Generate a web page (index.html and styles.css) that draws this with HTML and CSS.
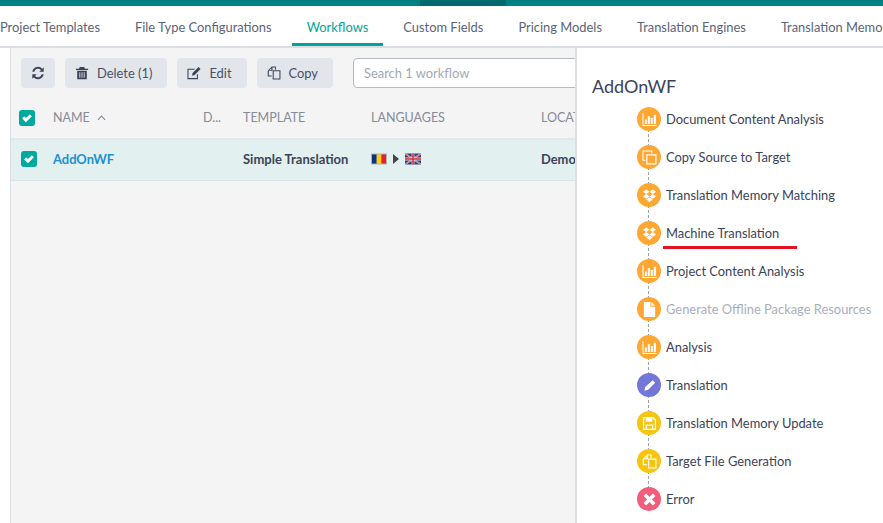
FILE: index.html
```html
<!DOCTYPE html>
<html lang="en">
<head>
  <meta charset="UTF-8">
  <title>Workflows</title>
  <link rel="stylesheet" href="styles.css">
</head>
<body>
  <svg class="icon-defs" width="0" height="0">
    <symbol id="i-chart" viewBox="0 0 16 16"><path d="M0.500 1h1.100v12.900H15.500V15H0.500z"/><path d="M3 8h2.200v4.800H3zM6.200 4.500h2.200v8.300H6.200zM9.400 6.500h2.200v6.300H9.400zM12.600 3h2.200v9.800h-2.200z"/></symbol>
    <symbol id="i-clone" viewBox="0 0 16 16"><path d="M0.500 0.500h10.500v3.200H9.900V1.600H1.600v8.800h2.100v1.100H0.500z"/><path d="M4.500 4.500h11v11h-11zm1.300 1.300v8.400h8.400V5.800z"/></symbol>
    <symbol id="i-dropbox" viewBox="0 0 16 16"><path d="M4.500 1.500 8 4 4.500 6.500 1 4zM11.500 1.500 15 4l-3.500 2.500L8 4zM4.500 6.500 8 9l-3.500 2.500L1 9zM11.500 6.500 15 9l-3.500 2.500L8 9zM4.500 12.300 8 9.900l3.500 2.400L8 14.800z"/></symbol>
    <symbol id="i-file" viewBox="0 0 16 16"><path d="M2 0h7v5h5v11H2zM10 0l4 4h-4z"/></symbol>
    <symbol id="i-pencil" viewBox="0 0 16 16"><path d="M11.500 2.500l2.500 2.500-7.500 7.500-4 1 1-4z"/></symbol>
    <symbol id="i-save" viewBox="0 0 16 16"><path d="M1 1h11l3 3v11H1zm1.300 1.300v11.400h1.700V9h8v4.700h1.700V4.600L11.500 2.300H11V6H4V2.300zM5.300 10.300v3.400h5.400v-3.400zM7.500 2.500h2v2.300h-2z"/></symbol>
    <symbol id="i-copy" viewBox="0 0 16 16"><path fill-rule="evenodd" d="M5.500 0.500h4.700v3.800h-1.100V1.600H6.300v3.900H2.100l-.1 5.400h3.300V12H0.800V5.400zM4.900 2.600 2.900 4.500h2zM6.500 4.800h8.900V15.500H6.500zM7.700 6v8.300h6.500V6z"/></symbol>
    <symbol id="i-times" viewBox="0 0 16 16"><path d="M4.300 1.700 8 5.400l3.700-3.700 2.600 2.600L10.600 8l3.700 3.700-2.600 2.600L8 10.600l-3.700 3.700-2.600-2.600L5.400 8 1.700 4.300z"/></symbol>
    <symbol id="i-refresh" viewBox="0 0 16 16"><path d="M14.500 1.500v5h-5l1.900-1.900A4.500 4.500 0 0 0 3.700 6.500H1.500a6.700 6.700 0 0 1 11.400-3.500zM1.500 14.500v-5h5l-1.900 1.900a4.500 4.500 0 0 0 7.700-1.900h2.200a6.700 6.700 0 0 1-11.400 3.500z"/></symbol>
    <symbol id="i-trash" viewBox="0 0 16 16"><path d="M5.500 1h5l1 2H15v1.500H1V3h3.500zM2.500 5.500h11V15h-11zM5 7v6.500h1V7zm2.500 0v6.500h1V7zM10 7v6.500h1V7z"/></symbol>
    <symbol id="i-edit" viewBox="0 0 16 16"><path d="M0.500 3h8.700L8 4.200H1.700v9.600h9.600V10l1.200-1.200V15h-12z"/><path d="M13.200 1l2.300 2.300L8.700 10.200 5.800 11l.6-3z"/></symbol>
    <symbol id="i-check" viewBox="0 0 16 16"><path d="M1.500 8.500 4.200 5.700l2.400 2.400L11.800 3 14.500 5.700 6.600 13.500z"/></symbol>
  </svg>

  <div class="topbar"><span class="topbar-mark"></span></div>

  <nav class="tabs">
    <a class="tab">Project Templates</a>
    <a class="tab">File Type Configurations</a>
    <a class="tab tab-active">Workflows</a>
    <a class="tab">Custom Fields</a>
    <a class="tab">Pricing Models</a>
    <a class="tab">Translation Engines</a>
    <a class="tab">Translation Memories</a>
  </nav>

  <div class="content">
    <main class="list">
      <div class="toolbar">
        <button class="btn btn-icon"><svg class="btn-svg"><use href="#i-refresh"/></svg></button>
        <button class="btn"><svg class="btn-svg"><use href="#i-trash"/></svg>Delete (1)</button>
        <button class="btn"><svg class="btn-svg"><use href="#i-edit"/></svg>Edit</button>
        <button class="btn"><svg class="btn-svg"><use href="#i-copy"/></svg>Copy</button>
        <div class="search">Search 1 workflow</div>
      </div>

      <div class="row row-head">
        <span class="check"><svg><use href="#i-check"/></svg></span>
        <span class="col-name">NAME <svg class="sort" viewBox="0 0 10 6"><path d="M1 5l4-4 4 4" fill="none" stroke="currentColor" stroke-width="1.300"/></svg></span>
        <span class="col-desc">D...</span>
        <span class="col-template">TEMPLATE</span>
        <span class="col-lang">LANGUAGES</span>
        <span class="col-loc">LOCATION</span>
      </div>

      <div class="row row-selected">
        <span class="check"><svg><use href="#i-check"/></svg></span>
        <a class="col-name wf-link">AddOnWF</a>
        <span class="col-desc"></span>
        <strong class="col-template">Simple Translation</strong>
        <span class="col-lang flags">
          <svg class="flag" viewBox="0 0 16 11"><rect width="16" height="11" fill="#b0b0b0"/><rect x="1" y="1" width="4.700" height="9" fill="#10307a"/><rect x="5.700" y="1" width="4.700" height="9" fill="#fbd116"/><rect x="10.400" y="1" width="4.600" height="9" fill="#e8212e"/></svg>
          <svg class="arrow" viewBox="0 0 6 10"><path d="M0 0l6 5-6 5z" fill="#44444c"/></svg>
          <svg class="flag" viewBox="0 0 16 11"><rect width="16" height="11" fill="#24407f"/><path d="M0 0l16 11M16 0L0 11" stroke="#d8c8d4" stroke-width="1.600"/><path d="M0 0l16 11M16 0L0 11" stroke="#d8404a" stroke-width=".7"/><path d="M8 0v11M0 5.500h16" stroke="#e4d8de" stroke-width="2.800"/><path d="M8 0v11M0 5.500h16" stroke="#d8303a" stroke-width="1.600"/></svg>
        </span>
        <strong class="col-loc">Demo</strong>
      </div>
    </main>

    <aside class="panel">
      <h2 class="panel-title">AddOnWF</h2>
      <ul class="steps">
        <li class="step"><span class="dot dot-orange"><svg><use href="#i-chart"/></svg></span>Document Content Analysis</li>
        <li class="step"><span class="dot dot-orange"><svg><use href="#i-clone"/></svg></span>Copy Source to Target</li>
        <li class="step"><span class="dot dot-orange"><svg><use href="#i-dropbox"/></svg></span>Translation Memory Matching</li>
        <li class="step"><span class="dot dot-orange"><svg><use href="#i-dropbox"/></svg></span>Machine Translation<span class="underline"></span></li>
        <li class="step"><span class="dot dot-orange"><svg><use href="#i-chart"/></svg></span>Project Content Analysis</li>
        <li class="step step-muted"><span class="dot dot-orange"><svg><use href="#i-file"/></svg></span>Generate Offline Package Resources</li>
        <li class="step"><span class="dot dot-orange"><svg><use href="#i-chart"/></svg></span>Analysis</li>
        <li class="step"><span class="dot dot-blue"><svg><use href="#i-pencil"/></svg></span>Translation</li>
        <li class="step"><span class="dot dot-yellow"><svg><use href="#i-save"/></svg></span>Translation Memory Update</li>
        <li class="step"><span class="dot dot-yellow"><svg><use href="#i-copy"/></svg></span>Target File Generation</li>
        <li class="step"><span class="dot dot-red"><svg><use href="#i-times"/></svg></span>Error</li>
      </ul>
    </aside>
  </div>
</body>
</html>
```

FILE: styles.css
```css
html, body {
  height: 100%;
}
body {
  margin: 0;
  display: flex;
  flex-direction: column;
  overflow: hidden;
  background-color: #fff;
  color: #3c4358;
  font-family: 'Lato', 'Open Sans', sans-serif;
  font-size: 12.9px;
}
.icon-defs {
  position: absolute;
}

/* top bar */
.topbar {
  flex: none;
  height: 6px;
  background-color: #008080;
  padding-left: 420px;
}
.topbar-mark {
  display: block;
  width: 86px;
  height: 6px;
  background-color: #006a6c;
}

/* tabs */
.tabs {
  flex: none;
  display: flex;
  height: 40px;
  margin-left: -15px;
  border-bottom: 2px solid #dcdee4;
  white-space: nowrap;
}
.tab {
  height: 40px;
  box-sizing: border-box;
  padding: 13px 15px 0;
  margin-right: 5px;
  color: #5a6478;
}
.tab-active {
  color: #00a59a;
  border-bottom: 3px solid #00a59a;
}

/* layout */
.content {
  flex: 1;
  display: flex;
  min-height: 0;
  padding-left: 10px;
}
.list {
  width: 564px;
  flex: none;
  overflow: hidden;
  background-color: #f4f4f4;
  border-left: 1px solid #dcdee4;
}
.panel {
  flex: 1;
  padding: 25px 0 0 15px;
  border-left: 2px solid #dcdee4;
  overflow: hidden;
}
.panel-title {
  margin: 0 0 1px;
  font-size: 18px;
  line-height: 26px;
  font-weight: 400;
}

/* toolbar */
.toolbar {
  display: flex;
  gap: 10px;
  height: 30px;
  padding: 10px 0 9px 10px;
}
.btn {
  display: flex;
  align-items: center;
  gap: 8px;
  height: 30px;
  padding: 0 15px 0 10px;
  border: none;
  border-radius: 4px;
  background-color: #e2e6ea;
  color: #4a4f68;
  font: inherit;
  white-space: nowrap;
}
.btn-icon {
  padding: 0 10px;
}
.btn-svg {
  width: 14px;
  height: 14px;
  fill: #3c4358;
}
.search {
  flex: none;
  width: 260px;
  height: 30px;
  box-sizing: border-box;
  margin-left: 10px;
  padding: 6px 10px;
  background-color: #fff;
  border: 1px solid #b4bac4;
  border-radius: 4px;
  color: #a4a9b4;
}

/* table */
.row {
  display: flex;
  align-items: center;
  white-space: nowrap;
}
.row-head {
  height: 41px;
  color: #868b99;
  font-size: 12.5px;
  border-bottom: 2px solid #e3e7ea;
  padding-left: 8px;
}
.row-selected {
  height: 38px;
  padding-bottom: 2px;
  background-color: #e2f0f0;
  border-bottom: 1px solid #d9e6e8;
  padding-left: 10px;
}
.check {
  flex: none;
  width: 16px;
  height: 16px;
  background-color: #00a99d;
  border-radius: 3px;
  display: flex;
  align-items: center;
  justify-content: center;
  margin-right: 18px;
}
.row-selected .check {
  margin-right: 16px;
}
.check svg {
  width: 12px;
  height: 12px;
  fill: #fff;
}
.col-name {
  flex: none;
  width: 150px;
}
.sort {
  width: 9px;
  height: 6px;
  margin-left: 4px;
  vertical-align: 1px;
}
.col-desc {
  flex: none;
  width: 40px;
}
.col-template {
  flex: none;
  width: 128px;
}
.row-selected .col-template {
  font-size: 13px;
}
.col-lang {
  flex: none;
  width: 170px;
}
.col-loc {
  flex: none;
}
.wf-link {
  color: #1a8fd1;
  font-weight: 700;
}
.flags {
  display: flex;
  align-items: center;
  gap: 6px;
  margin-top: -1px;
}
.flag {
  width: 16px;
  height: 12px;
}
.arrow {
  width: 6px;
  height: 10px;
}

/* steps */
.steps {
  list-style: none;
  margin: 0;
  padding: 0 0 0 45px;
}
.step {
  position: relative;
  display: flex;
  align-items: center;
  gap: 5px;
  height: 38px;
  white-space: nowrap;
}
.step::before {
  content: "";
  position: absolute;
  left: 11px;
  top: 19px;
  height: 38px;
  border-left: 1px dashed #9aa0a8;
}
.step:last-child::before {
  display: none;
}
.step-muted {
  color: #a9afbd;
}
.dot {
  position: relative;
  flex: none;
  width: 24px;
  height: 24px;
  border-radius: 50%;
  display: flex;
  align-items: center;
  justify-content: center;
}
.dot svg {
  width: 15px;
  height: 15px;
  fill: #fff;
}
.dot-orange {
  background-color: #ffa733;
}
.dot-blue {
  background-color: #7378d8;
}
.dot-yellow {
  background-color: #f7c40f;
}
.dot-red {
  background-color: #f25d7c;
}
.underline {
  position: absolute;
  left: 26px;
  top: 32px;
  width: 134px;
  height: 3px;
  background-color: #e5121f;
}
```
